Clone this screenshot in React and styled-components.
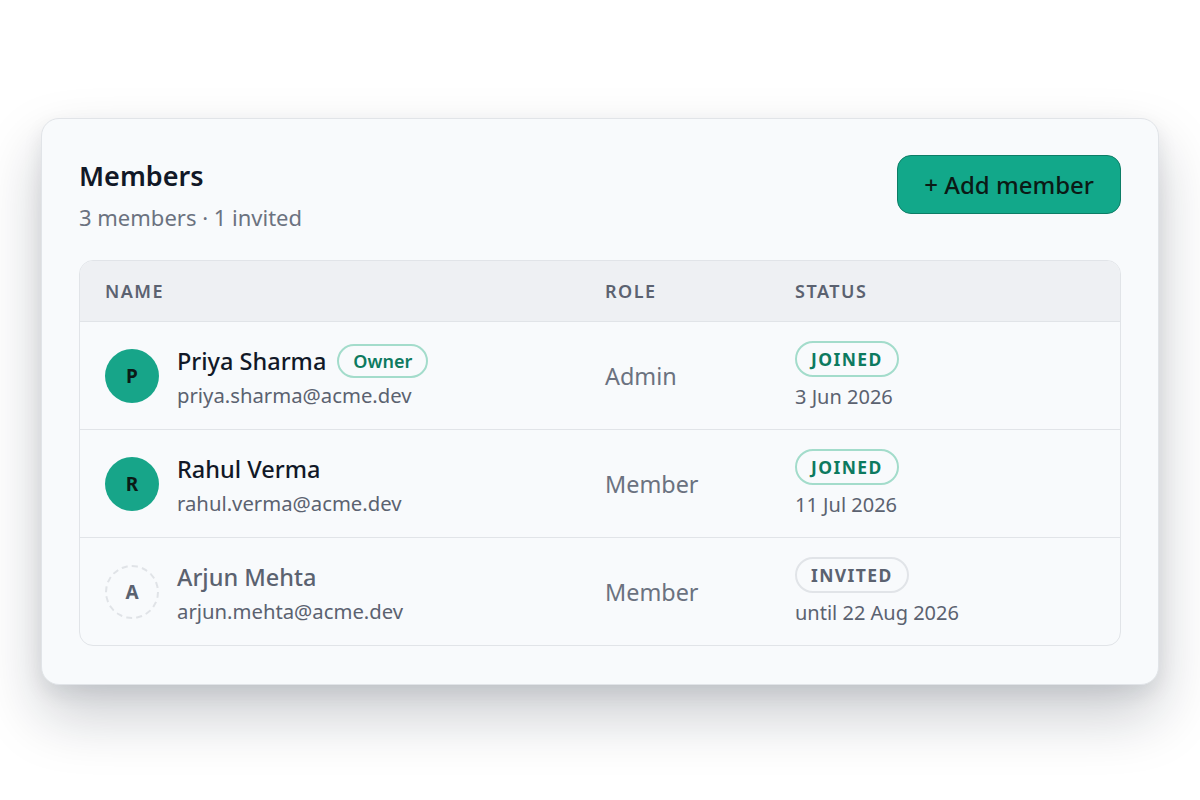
import React from "react";
import styled, { createGlobalStyle } from "styled-components";

const GlobalStyle = createGlobalStyle`
  * { box-sizing: border-box; }
  body {
    margin: 0;
    background: #ffffff;
    font-family: "Noto Sans", "Open Sans", sans-serif;
  }
`;

const Page = styled.div`
  min-height: 100vh;
  padding-top: 3px;
  display: flex;
  align-items: center;
  justify-content: center;
`;

const Card = styled.section`
  width: 1118px;
  background: #f8fafc;
  border: 1px solid #e1e4e8;
  border-radius: 18px;
  padding: 36px 37px 38px;
  box-shadow: 0 30px 60px rgba(15, 23, 42, 0.22), 0 8px 20px rgba(15, 23, 42, 0.08);
`;

const Header = styled.div`
  display: flex;
  justify-content: space-between;
  align-items: flex-start;
  margin-bottom: 29px;
`;

const Title = styled.h2`
  margin: 0;
  font-size: 27px;
  line-height: 42px;
  font-weight: 600;
  color: #111827;
`;

const Subtitle = styled.p`
  margin: 6px 0 0;
  font-size: 22px;
  line-height: 28px;
  color: #6b7280;
`;

const AddButton = styled.button`
  height: 59px;
  padding: 0 26px;
  border-radius: 14px;
  border: 1px solid #0c7d66;
  background: #12a88a;
  color: #0b1a16;
  font-family: inherit;
  font-size: 24px;
  font-weight: 500;
  cursor: pointer;
`;

const Table = styled.div`
  border: 1px solid #e1e4e8;
  border-radius: 14px;
  overflow: hidden;
  background: #f8fafc;
`;

const Row = styled.div`
  display: grid;
  grid-template-columns: 500px 190px 1fr;
  align-items: center;
  height: ${(p) => (p.$head ? "60px" : "108px")};
  background: ${(p) => (p.$head ? "#eef0f3" : "transparent")};
  border-top: ${(p) => (p.$first ? "none" : "1px solid #e1e4e8")};
`;

const Cell = styled.div`
  padding: 0 25px;
`;

const HeadCell = styled(Cell)`
  font-size: 18px;
  font-weight: 600;
  letter-spacing: 1.5px;
  color: #5b6270;
  text-transform: uppercase;
`;

const NameCell = styled(Cell)`
  display: flex;
  align-items: center;
  gap: 18px;
`;

const Avatar = styled.div`
  width: 54px;
  height: 54px;
  border-radius: 50%;
  flex-shrink: 0;
  display: flex;
  align-items: center;
  justify-content: center;
  font-size: 19px;
  font-weight: 700;
  background: ${(p) => (p.$pending ? "transparent" : "#17a589")};
  border: ${(p) => (p.$pending ? "2px dashed #e0e3e7" : "none")};
  color: ${(p) => (p.$pending ? "#5b6270" : "#0b1a16")};
`;

const NameLine = styled.div`
  display: flex;
  align-items: center;
  gap: 11px;
  height: 34px;
`;

const Name = styled.span`
  font-size: 23.5px;
  font-weight: 500;
  color: ${(p) => (p.$pending ? "#5b6270" : "#111827")};
`;

const Email = styled.div`
  font-size: 20.3px;
  line-height: 26px;
  margin-top: 4px;
  color: #5b6270;
`;

const Pill = styled.span`
  display: inline-flex;
  align-items: center;
  border-radius: 999px;
  border: 2px solid ${(p) => (p.$muted ? "#e1e4e8" : "#a3dccb")};
  color: ${(p) => (p.$muted ? "#5b6270" : "#0d7a5f")};
  font-weight: 600;
`;

const OwnerPill = styled(Pill)`
  height: 34px;
  padding: 0 14px;
  font-size: 18px;
`;

const StatusPill = styled(Pill)`
  height: 36px;
  padding: 0 14px;
  font-size: 17.5px;
  font-weight: 700;
  letter-spacing: 1.4px;
`;

const Role = styled(Cell)`
  font-size: 23.4px;
  color: #6b7280;
`;

const StatusCell = styled(Cell)`
  display: flex;
  flex-direction: column;
  align-items: flex-start;
`;

const DateText = styled.div`
  margin-top: 7px;
  font-size: 20px;
  line-height: 26px;
  color: #5b6270;
`;

const members = [
  { initial: "P", name: "Priya Sharma", email: "priya.sharma@acme.dev", owner: true, role: "Admin", status: "JOINED", date: "3 Jun 2026" },
  { initial: "R", name: "Rahul Verma", email: "rahul.verma@acme.dev", role: "Member", status: "JOINED", date: "11 Jul 2026" },
  { initial: "A", name: "Arjun Mehta", email: "arjun.mehta@acme.dev", pending: true, role: "Member", status: "INVITED", date: "until 22 Aug 2026" },
];

export default function App() {
  return (
    <Page>
      <GlobalStyle />
      <Card>
        <Header>
          <div>
            <Title>Members</Title>
            <Subtitle>3 members · 1 invited</Subtitle>
          </div>
          <AddButton>+ Add member</AddButton>
        </Header>
        <Table>
          <Row $head $first>
            <HeadCell>Name</HeadCell>
            <HeadCell>Role</HeadCell>
            <HeadCell>Status</HeadCell>
          </Row>
          {members.map((m) => (
            <Row key={m.email}>
              <NameCell>
                <Avatar $pending={m.pending}>{m.initial}</Avatar>
                <div>
                  <NameLine>
                    <Name $pending={m.pending}>{m.name}</Name>
                    {m.owner && <OwnerPill>Owner</OwnerPill>}
                  </NameLine>
                  <Email>{m.email}</Email>
                </div>
              </NameCell>
              <Role>{m.role}</Role>
              <StatusCell>
                <StatusPill $muted={m.pending}>{m.status}</StatusPill>
                <DateText>{m.date}</DateText>
              </StatusCell>
            </Row>
          ))}
        </Table>
      </Card>
    </Page>
  );
}
